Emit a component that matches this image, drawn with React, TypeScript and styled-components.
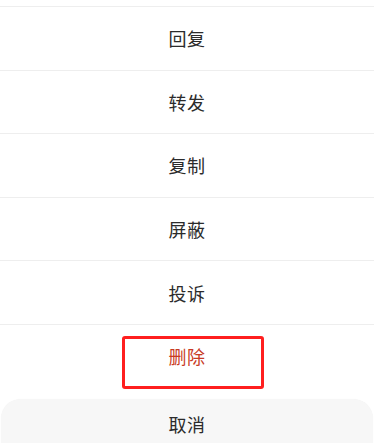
import React from 'react';
import styled, { createGlobalStyle } from 'styled-components';

const GlobalStyle = createGlobalStyle`
    html, body {
        margin: 0;
        padding: 0;
        background: #ffffff;
    }
    body {
        font-family: "Noto Sans CJK SC", "Noto Sans", sans-serif;
    }
`;

type Action = { label: string; danger?: boolean; marked?: boolean };

const actions: Action[] = [
    { label: '回复' },
    { label: '转发' },
    { label: '复制' },
    { label: '屏蔽' },
    { label: '投诉' },
    { label: '删除', danger: true, marked: true },
];

const App: React.FC = () => {
    return (
        <>
            <GlobalStyle />
            <Sheet>
                <ScrolledEdge />
                <List>
                    {actions.map((a, i) => (
                        <Row key={a.label} last={i === actions.length - 1}>
                            <Label danger={a.danger}>{a.label}</Label>
                            {a.marked && <Mark />}
                        </Row>
                    ))}
                </List>
                <Cancel>
                    <Label>取消</Label>
                </Cancel>
            </Sheet>
        </>
    );
};

export default App;

const Sheet = styled.div`
    width: 374px;
    height: 443px;
    overflow: hidden;
    display: flex;
    flex-direction: column;
    background: #ffffff;
`;

const ScrolledEdge = styled.div`
    height: 6px;
    flex-shrink: 0;
    border-bottom: 1px solid #eeeeee;
`;

const List = styled.div`
    display: flex;
    flex-direction: column;
`;

const Row = styled.div<{ last?: boolean }>`
    position: relative;
    box-sizing: border-box;
    height: ${p => (p.last ? '63px' : '63.6px')};
    flex-shrink: 0;
    display: flex;
    align-items: center;
    justify-content: center;
    border-bottom: ${p => (p.last ? 'none' : '1px solid #eeeeee')};
`;

const Label = styled.span<{ danger?: boolean }>`
    font-size: 18px;
    line-height: 1;
    color: ${p => (p.danger ? '#c83a24' : '#2b2b2b')};
    letter-spacing: 0.5px;
`;

const Mark = styled.div`
    position: absolute;
    left: 122px;
    top: 11px;
    width: 142px;
    height: 53px;
    box-sizing: border-box;
    border: 3px solid #ff1f1f;
    border-radius: 3px;
`;

const Cancel = styled.div`
    margin-top: 11px;
    margin-left: 1px;
    margin-right: 1px;
    height: 60px;
    flex-shrink: 0;
    display: flex;
    align-items: flex-start;
    justify-content: center;
    padding-top: 16px;
    background: #f7f7f7;
    border-radius: 20px 20px 0 0;
    box-shadow: 0 0 1px rgba(0, 0, 0, 0.06);
`;
